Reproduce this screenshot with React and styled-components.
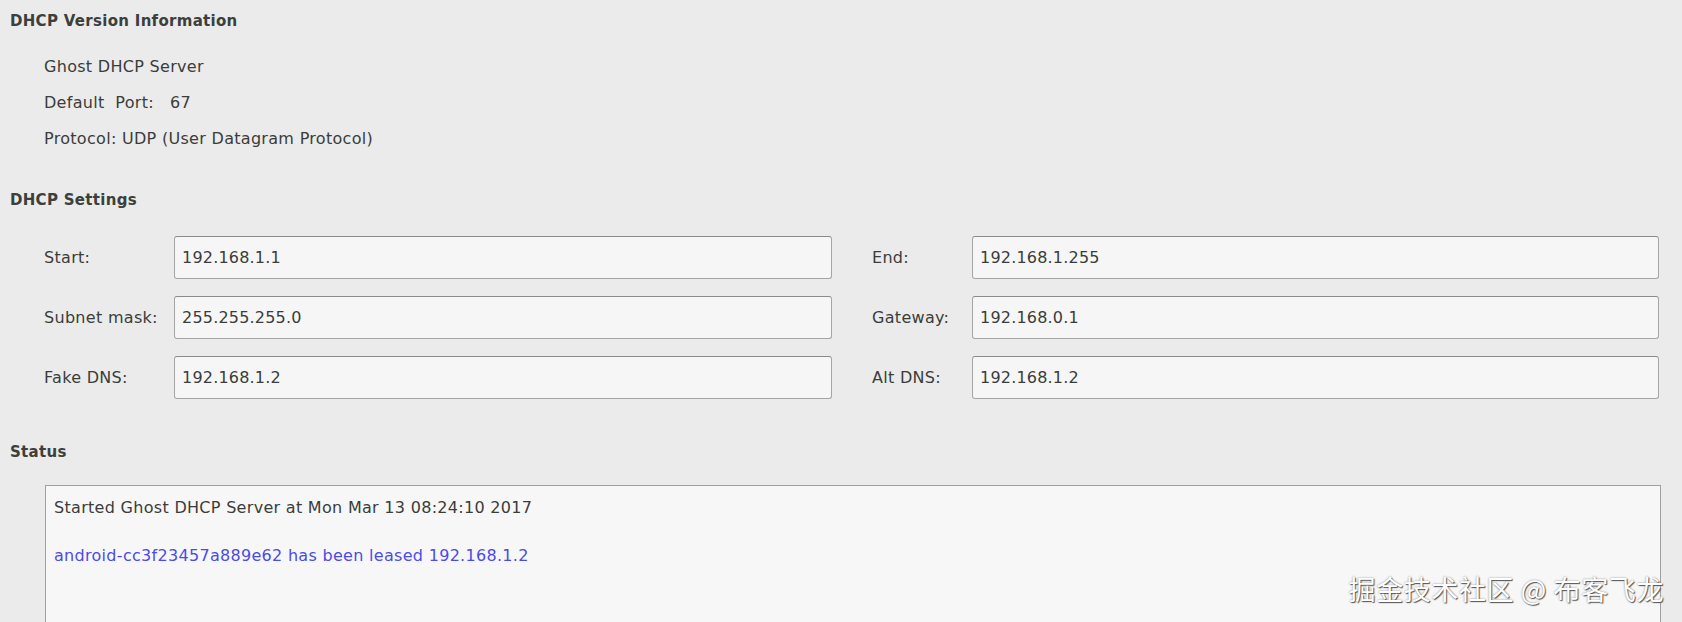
import React from "react";
import styled, { createGlobalStyle } from "styled-components";

const GlobalStyle = createGlobalStyle`
  html, body {
    margin: 0;
    padding: 0;
    background: #ebebeb;
    overflow: hidden;
  }
  body {
    font-family: "DejaVu Sans", "Noto Sans", sans-serif;
    color: #3a3d3a;
    letter-spacing: 0.3px;
  }
`;

const versionLines = [
  "Ghost DHCP Server",
  "Default  Port:   67",
  "Protocol: UDP (User Datagram Protocol)",
];

const settings = [
  { label: "Start:", value: "192.168.1.1" },
  { label: "End:", value: "192.168.1.255", right: true },
  { label: "Subnet mask:", value: "255.255.255.0" },
  { label: "Gateway:", value: "192.168.0.1", right: true },
  { label: "Fake DNS:", value: "192.168.1.2" },
  { label: "Alt DNS:", value: "192.168.1.2", right: true },
];

const logLines = [
  { text: "Started Ghost DHCP Server at Mon Mar 13 08:24:10 2017" },
  { text: "android-cc3f23457a889e62 has been leased 192.168.1.2", lease: true },
];

function App() {
  return (
    <Page>
      <GlobalStyle />
      <Heading>DHCP Version Information</Heading>
      <InfoList>
        {versionLines.map((l) => (
          <InfoLine key={l}>{l}</InfoLine>
        ))}
      </InfoList>

      <Heading $top={44}>DHCP Settings</Heading>
      <SettingsGrid>
        {settings.map((s) => (
          <React.Fragment key={s.label}>
            <FieldLabel $right={s.right}>{s.label}</FieldLabel>
            <Input defaultValue={s.value} readOnly />
          </React.Fragment>
        ))}
      </SettingsGrid>

      <Heading $top={45}>Status</Heading>
      <StatusBox>
        {logLines.map((l) => (
          <LogLine key={l.text} $lease={l.lease}>
            {l.text}
          </LogLine>
        ))}
      </StatusBox>

      <Watermark>掘金技术社区 @ 布客飞龙</Watermark>
    </Page>
  );
}

const Page = styled.div`
  position: relative;
  width: 1682px;
  height: 622px;
  overflow: hidden;
  padding: 13px 0 0 10px;
  box-sizing: border-box;
`;

const Heading = styled.h2`
  margin: ${(p) => p.$top || 0}px 0 0 0;
  font-size: 15px;
  font-weight: bold;
  line-height: 17px;
  color: #3b403b;
`;

const InfoList = styled.div`
  display: flex;
  flex-direction: column;
  gap: 17px;
  margin: 27px 0 0 34px;
`;

const InfoLine = styled.div`
  font-size: 16px;
  line-height: 19px;
  white-space: pre;
`;

const SettingsGrid = styled.div`
  display: grid;
  grid-template-columns: 130px 658px 140px 687px;
  align-items: center;
  row-gap: 17px;
  margin: 27px 0 0 34px;
`;

const FieldLabel = styled.label`
  padding-left: ${(p) => (p.$right ? 40 : 0)}px;
  font-size: 16px;
`;

const Input = styled.input`
  height: 43px;
  box-sizing: border-box;
  padding: 0 7px;
  border: 1px solid #a5a5a5;
  border-top-color: #8a8a8a;
  border-radius: 3px;
  background: #f6f6f6;
  font-family: "DejaVu Sans", sans-serif;
  font-size: 16px;
  letter-spacing: 0.2px;
  color: #3a3d3a;
  outline: none;
`;

const StatusBox = styled.div`
  margin: 24px 0 0 35px;
  width: 1616px;
  height: 200px;
  box-sizing: border-box;
  border: 1px solid #a0a0a0;
  background: #f7f7f7;
  padding: 12px 0 0 8px;
  display: flex;
  flex-direction: column;
  gap: 29px;
`;

const LogLine = styled.div`
  font-size: 16px;
  line-height: 19px;
  color: ${(p) => (p.$lease ? "#4b4be6" : "#3a3d3a")};
`;

const Watermark = styled.div`
  position: absolute;
  right: 18px;
  bottom: 16px;
  font-family: "Noto Sans CJK SC", sans-serif;
  font-size: 27px;
  line-height: 34px;
  letter-spacing: 0.6px;
  color: #ffffff;
  text-shadow: 1px 1px 1px #555, 0 0 2px #888;
`;

export default App;
